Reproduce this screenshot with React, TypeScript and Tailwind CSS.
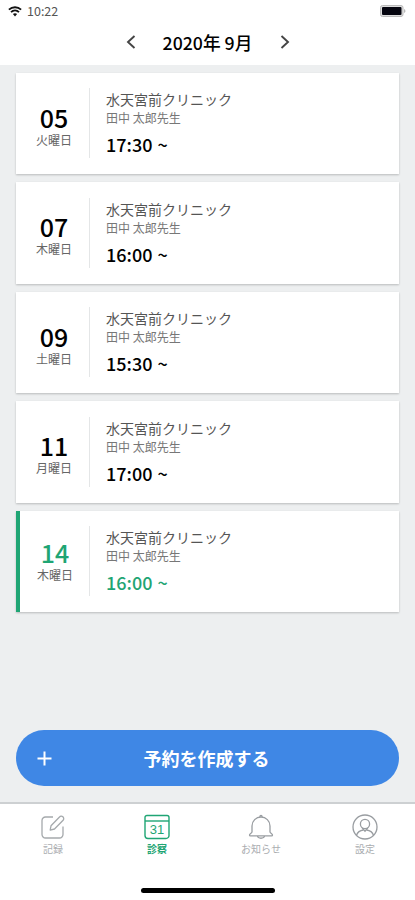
import clsx from "clsx";

type Appointment = {
  day: string;
  weekday: string;
  time: string;
  active?: boolean;
};

const appointments: Appointment[] = [
  { day: "05", weekday: "火曜日", time: "17:30" },
  { day: "07", weekday: "木曜日", time: "16:00" },
  { day: "09", weekday: "土曜日", time: "15:30" },
  { day: "11", weekday: "月曜日", time: "17:00" },
  { day: "14", weekday: "木曜日", time: "16:00", active: true },
];

function StatusBar() {
  return (
    <div className="flex h-[22px] items-center justify-between pl-2 pr-[9px]">
      <div className="flex items-center gap-[5px]">
        <svg width="14" height="11" viewBox="0 0 14 11" fill="none" stroke="#111" strokeWidth="1.9">
          <path d="M0.9 3.6C4.4 0.4 9.6 0.4 13.1 3.6" />
          <path d="M3 6.1C5.3 4 8.7 4 11 6.1" />
          <path d="M7 10.4L4.9 8.1C6.1 7 7.9 7 9.1 8.1Z" fill="#111" stroke="none" />
        </svg>
        <span className="text-[12.5px] leading-[22px] text-[#555]">10:22</span>
      </div>
      <svg width="26" height="12" viewBox="0 0 26 12">
        <rect x="0.5" y="0.5" width="22.5" height="11" rx="2" fill="#ddd" stroke="#bbb" />
        <rect x="2" y="2" width="19.5" height="8" rx="1" fill="#05050f" />
        <path d="M24.3 4v4c1.4-.5 1.4-3.5 0-4z" fill="#999" />
      </svg>
    </div>
  );
}

function MonthHeader() {
  return (
    <div className="flex h-[43px] items-center justify-center pb-[3px]">
      <svg className="mr-[27px]" width="10" height="14" viewBox="0 0 10 14" fill="none" stroke="#444" strokeWidth="1.9">
        <path d="M8.5 1L2 7l6.5 6" />
      </svg>
      <h1 className="w-[90px] whitespace-nowrap text-center text-[17.7px] font-medium leading-[38px] text-black">
        2020年 9月
      </h1>
      <svg className="ml-[27px]" width="10" height="14" viewBox="0 0 10 14" fill="none" stroke="#444" strokeWidth="1.9">
        <path d="M1.5 1L8 7l-6.5 6" />
      </svg>
    </div>
  );
}

function AppointmentCard({ item }: { item: Appointment }) {
  return (
    <div
      className={clsx(
        "flex h-[101.5px] items-center bg-white shadow-[0_1px_2px_rgba(0,0,0,0.22)]",
        item.active && "border-l-4 border-[#1fa574]"
      )}
    >
      <div className={clsx("text-center", item.active ? "w-[69px] pl-px" : "w-[73px] pl-[3px] pt-[6px]")}>
        <p className={clsx("text-[25px] font-medium leading-[25px]", item.active ? "text-[#1fa574]" : "text-black")}>
          {item.day}
        </p>
        <p className="mt-[2px] text-[12px] leading-[16px] text-[#666]">{item.weekday}</p>
      </div>
      <div className="h-[70px] w-px bg-[#e4e6e7]" />
      <div className="pb-px pl-4">
        <p className="text-[14px] leading-[20px] text-[#555]">水天宮前クリニック</p>
        <p className="text-[12px] leading-[18px] text-[#777]">田中 太郎先生</p>
        <p
          className={clsx(
            "mt-[5px] text-[18px] font-medium leading-[24px]",
            item.active ? "text-[#1fa574]" : "text-black"
          )}
        >
          {item.time}
          <span className="ml-[5px]">~</span>
        </p>
      </div>
    </div>
  );
}

function EditIcon() {
  return (
    <svg width="26" height="26" viewBox="0 0 26 26" fill="none" stroke="#a5a9ac" strokeWidth="1.3">
      <path d="M13 3H5.500A3.500 3.500 0 0 0 2 6.500v14A3.500 3.500 0 0 0 5.500 24h14a3.500 3.500 0 0 0 3.500-3.500V12.500" />
      <path d="M11 11.800L19.500 3a2.300 2.300 0 0 1 3.600 3.200L14.500 15l-4.300 1.200z" strokeLinejoin="round" />
    </svg>
  );
}

function CalendarIcon() {
  return (
    <svg width="26" height="26" viewBox="0 0 26 26" fill="none" stroke="#1fa574" strokeWidth="1.4">
      <path d="M1 3.500a2 2 0 0 1 2-2h20a2 2 0 0 1 2 2v18a3 3 0 0 1-3 3H4a3 3 0 0 1-3-3z" />
      <path d="M1 7h24" />
      <text
        x="13"
        y="19.5"
        textAnchor="middle"
        fontSize="13"
        fontFamily="Liberation Sans, sans-serif"
        fill="#1fa574"
        stroke="none"
      >
        31
      </text>
    </svg>
  );
}

function BellIcon() {
  return (
    <svg width="26" height="26" viewBox="0 0 26 26" fill="none" stroke="#999da1" strokeWidth="1.3">
      <path
        d="M4 18V12a9 9 0 0 1 18 0v6c0 1 2.500 1.500 2.500 3 0 .6-.4.900-1 .900H2.500c-.6 0-1-.3-1-.900 0-1.500 2.500-2 2.500-3z"
        strokeLinejoin="round"
      />
      <path d="M12 3V2.300a1 1 0 0 1 2 0V3M9.500 22c.5 3 6.500 3 7 0" />
    </svg>
  );
}

function UserIcon() {
  return (
    <svg width="26" height="26" viewBox="0 0 26 26" fill="none" stroke="#999da1" strokeWidth="1.3">
      <circle cx="13" cy="13" r="12" />
      <circle cx="13" cy="10" r="4.600" />
      <path d="M10.200 14L13 17.200 15.800 14" />
      <path d="M4.500 21.200c1.200-3.600 3.800-4.700 7-5.200M21.500 21.200c-1.200-3.600-3.800-4.700-7-5.200" />
    </svg>
  );
}

const tabs = [
  { label: "記録", icon: <EditIcon /> },
  { label: "診察", icon: <CalendarIcon />, active: true },
  { label: "お知らせ", icon: <BellIcon /> },
  { label: "設定", icon: <UserIcon /> },
];

export default function App() {
  return (
    <div className="flex h-[900px] w-[415px] flex-col overflow-hidden bg-white font-['Noto_Sans_CJK_JP',sans-serif]">
      <header>
        <StatusBar />
        <MonthHeader />
      </header>

      <main className="flex flex-1 flex-col justify-between bg-[#edeff0] px-4 pb-4 pt-[7.5px]">
        <div className="flex flex-col gap-2">
          {appointments.map((item) => (
            <AppointmentCard key={item.day} item={item} />
          ))}
        </div>
        <button className="flex h-[56px] items-center rounded-full bg-[#3f87e5] text-white">
          <svg className="ml-[21px]" width="15" height="15" viewBox="0 0 15 15" stroke="#fff" strokeWidth="2">
            <path d="M7.5 0.5v14M0.5 7.5h14" />
          </svg>
          <span className="flex-1 pr-[38px] text-center text-[18px] font-bold leading-[28px]">予約を作成する</span>
        </button>
      </main>

      <nav className="flex h-[98px] flex-col border-t-2 border-[#cdd0d2] bg-white">
        <div className="grid grid-cols-[repeat(4,104px)] pl-px pt-[10px]">
          {tabs.map((tab) => (
            <div key={tab.label} className="flex flex-col items-center">
              {tab.icon}
              <span
                className={clsx(
                  "text-[10px] leading-[17px]",
                  tab.active ? "font-bold text-[#1fa574]" : "text-[#aaadb0]"
                )}
              >
                {tab.label}
              </span>
            </div>
          ))}
        </div>
        <div className="mx-auto mt-[31px] h-[5px] w-[134px] rounded-full bg-black" />
      </nav>
    </div>
  );
}
